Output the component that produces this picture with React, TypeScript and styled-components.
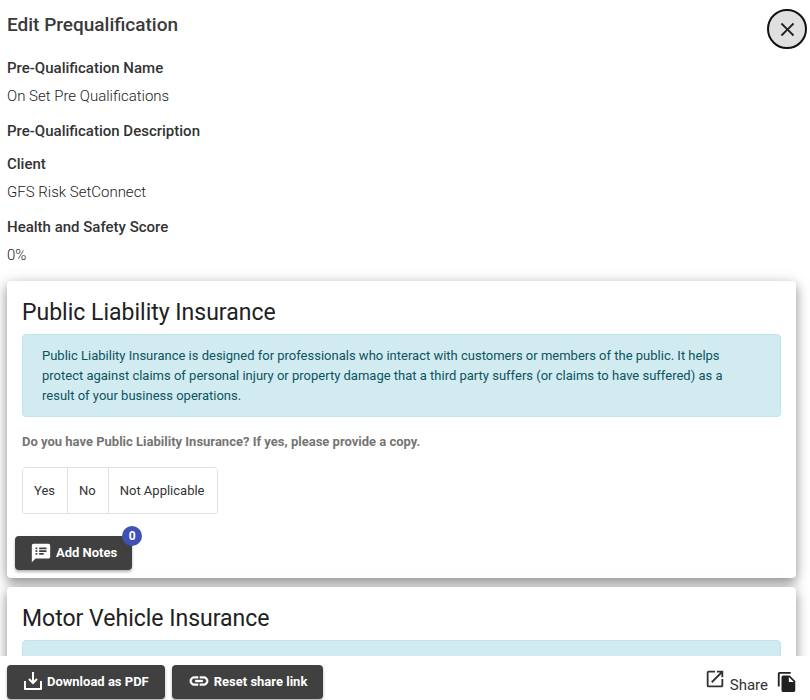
import React from "react";
import styled, { createGlobalStyle } from "styled-components";
import { MdClose, MdSpeakerNotes, MdOutlineOpenInNew, MdFileCopy } from "react-icons/md";

const GlobalStyle = createGlobalStyle`
  *, *::before, *::after { box-sizing: border-box; }
  body {
    margin: 0;
    background: #fff;
    color: #212121;
    font-family: Roboto, "Liberation Sans", sans-serif;
    font-size: 14px;
  }
  button { font-family: inherit; cursor: pointer; }
`;

const Dialog = styled.main`
  display: flex;
  flex-direction: column;
  height: 100vh;
`;

const Content = styled.div`
  flex: 1;
  min-height: 0;
  overflow-y: auto;
  scrollbar-width: none;
  padding: 9px 14px 0 7px;
`;

const Header = styled.header`
  display: flex;
  justify-content: space-between;
  align-items: flex-start;
  height: 48px;
  margin-right: -11px;
`;

const Title = styled.h1`
  margin: 0;
  font-size: 19px;
  line-height: 32px;
  font-weight: 500;
  color: #3a3a3a;
`;

const CloseButton = styled.button`
  display: flex;
  align-items: center;
  justify-content: center;
  width: 40px;
  height: 40px;
  padding: 0;
  border: 2px solid #111;
  border-radius: 50%;
  background: #e0e0e0;
  color: #222;
`;

const Details = styled.dl`
  margin: 0 0 15px;
`;

const Term = styled.dt`
  font-size: 15px;
  line-height: 22px;
  font-weight: 500;
  color: #333;
  margin-bottom: 6px;
`;

const Value = styled.dd`
  margin: 0 0 13px;
  font-size: 15px;
  line-height: 22px;
  font-weight: 300;
  color: #212121;
`;

const EmptyValue = styled.dd`
  margin: 0;
  height: 5px;
`;

const Card = styled.section`
  display: flex;
  flex-direction: column;
  align-items: flex-start;
  margin-bottom: 9px;
  padding: 16px 15px 8px;
  border-radius: 4px;
  background: #fff;
  box-shadow: 0 5px 11px rgba(0, 0, 0, 0.35), 0 2px 16px rgba(0, 0, 0, 0.15);
`;

const CardTitle = styled.h2`
  margin: 0 0 5px;
  font-size: 23px;
  line-height: 32px;
  font-weight: 400;
  color: #212121;
`;

const Info = styled.p`
  align-self: stretch;
  min-height: 83px;
  margin: 0 0 14px;
  padding: 11px 40px 10px 19px;
  border: 1px solid #bee5eb;
  border-radius: 4px;
  background: #d1ebf0;
  color: #0c5460;
  font-size: 13px;
  line-height: 20px;
`;

const Question = styled.h3`
  margin: 0 0 14px;
  font-size: 13px;
  line-height: 22px;
  font-weight: 700;
  color: #757575;
`;

const Choices = styled.div`
  display: flex;
  margin-bottom: 22px;
  border: 1px solid #e0e0e0;
  border-radius: 4px;
  overflow: hidden;
`;

const Choice = styled.button`
  height: 45px;
  padding: 0 12px 0 11px;
  border: 0;
  border-left: 1px solid #e0e0e0;
  background: #fff;
  color: #333;
  font-size: 13px;

  &:first-child { border-left: 0; }
`;

const DarkButton = styled.button<{ $inset: number }>`
  position: relative;
  display: flex;
  align-items: center;
  gap: 4px;
  height: 34px;
  padding: 0 ${(p) => p.$inset}px 2px;
  border: 0;
  border-radius: 4px;
  background: #404040;
  color: #fff;
  font-size: 13px;
  font-weight: 700;
  box-shadow: 0 2px 3px rgba(0, 0, 0, 0.3);
`;

const NotesRow = styled.div`
  margin-left: -7px;
`;

const Badge = styled.span`
  position: absolute;
  top: -10px;
  right: -10px;
  width: 20px;
  height: 20px;
  border-radius: 50%;
  background: #3f51b5;
  font-size: 12px;
  line-height: 20px;
  text-align: center;
`;

const Footer = styled.footer`
  display: flex;
  align-items: flex-start;
  gap: 7px;
  height: 44px;
  padding: 9px 12px 0 7px;
  background: #fff;
`;

const Share = styled.div`
  display: flex;
  align-items: flex-start;
  gap: 8px;
  margin-left: auto;
`;

const ShareLink = styled.a`
  display: flex;
  gap: 4px;
  color: #333;
  font-size: 15px;
  line-height: 22px;
  text-decoration: none;

  span { margin-top: 9px; }
  svg { margin-top: 3px; }
`;

const CopyButton = styled.button`
  display: flex;
  padding: 6px 0 0;
  border: 0;
  background: none;
  color: #212121;
`;

const NotesIcon = styled(MdSpeakerNotes)`
  margin-top: 2px;
`;

const LinkIcon = () => (
  <svg width="22" height="22" viewBox="0 0 24 24" fill="currentColor" stroke="currentColor" strokeWidth="0.5" aria-hidden="true">
    <path d="M3.900 12c0-1.710 1.390-3.100 3.100-3.100h4V7H7c-2.760 0-5 2.240-5 5s2.240 5 5 5h4v-1.900H7c-1.710 0-3.100-1.390-3.100-3.100zM8 13h8v-2H8v2zm9-6h-4v1.900h4c1.710 0 3.100 1.390 3.100 3.100s-1.390 3.100-3.100 3.100h-4V17h4c2.760 0 5-2.240 5-5s-2.240-5-5-5z" />
  </svg>
);

const DownloadIcon = () => (
  <svg width="20" height="20" viewBox="0 0 20 20" fill="none" stroke="currentColor" strokeWidth="2" strokeLinejoin="round" aria-hidden="true">
    <path d="M2 10v8h16v-8" />
    <path d="M10 1v10" />
    <path d="M6 8l4 4 4-4" strokeLinejoin="miter" />
  </svg>
);

type SectionProps = { title: string; info?: string; question?: string };

const Section = ({ title, info, question }: SectionProps) => (
  <Card>
    <CardTitle>{title}</CardTitle>
    <Info>{info}</Info>
    {question && (
      <>
        <Question>{question}</Question>
        <Choices role="group" aria-label={question}>
          <Choice type="button">Yes</Choice>
          <Choice type="button">No</Choice>
          <Choice type="button">Not Applicable</Choice>
        </Choices>
        <NotesRow>
          <DarkButton type="button" $inset={15}>
            <NotesIcon size={22} />
            Add Notes
            <Badge>0</Badge>
          </DarkButton>
        </NotesRow>
      </>
    )}
  </Card>
);

export default function App() {
  return (
    <>
      <GlobalStyle />
      <Dialog>
        <Content>
          <Header>
            <Title>Edit Prequalification</Title>
            <CloseButton type="button" aria-label="Close">
              <MdClose size={23} />
            </CloseButton>
          </Header>
          <Details>
            <Term>Pre-Qualification Name</Term>
            <Value>On Set Pre Qualifications</Value>
            <Term>Pre-Qualification Description</Term>
            <EmptyValue />
            <Term>Client</Term>
            <Value>GFS Risk SetConnect</Value>
            <Term>Health and Safety Score</Term>
            <Value>0%</Value>
          </Details>
          <Section
            title="Public Liability Insurance"
            info="Public Liability Insurance is designed for professionals who interact with customers or members of the public. It helps protect against claims of personal injury or property damage that a third party suffers (or claims to have suffered) as a result of your business operations."
            question="Do you have Public Liability Insurance? If yes, please provide a copy."
          />
          <Section title="Motor Vehicle Insurance" />
        </Content>
        <Footer>
          <DarkButton type="button" $inset={16}>
            <DownloadIcon />
            Download as PDF
          </DarkButton>
          <DarkButton type="button" $inset={16}>
            <LinkIcon />
            Reset share link
          </DarkButton>
          <Share>
            <ShareLink href="#share">
              <MdOutlineOpenInNew size={22} />
              <span>Share</span>
            </ShareLink>
            <CopyButton type="button" aria-label="Copy link">
              <MdFileCopy size={22} />
            </CopyButton>
          </Share>
        </Footer>
      </Dialog>
    </>
  );
}
